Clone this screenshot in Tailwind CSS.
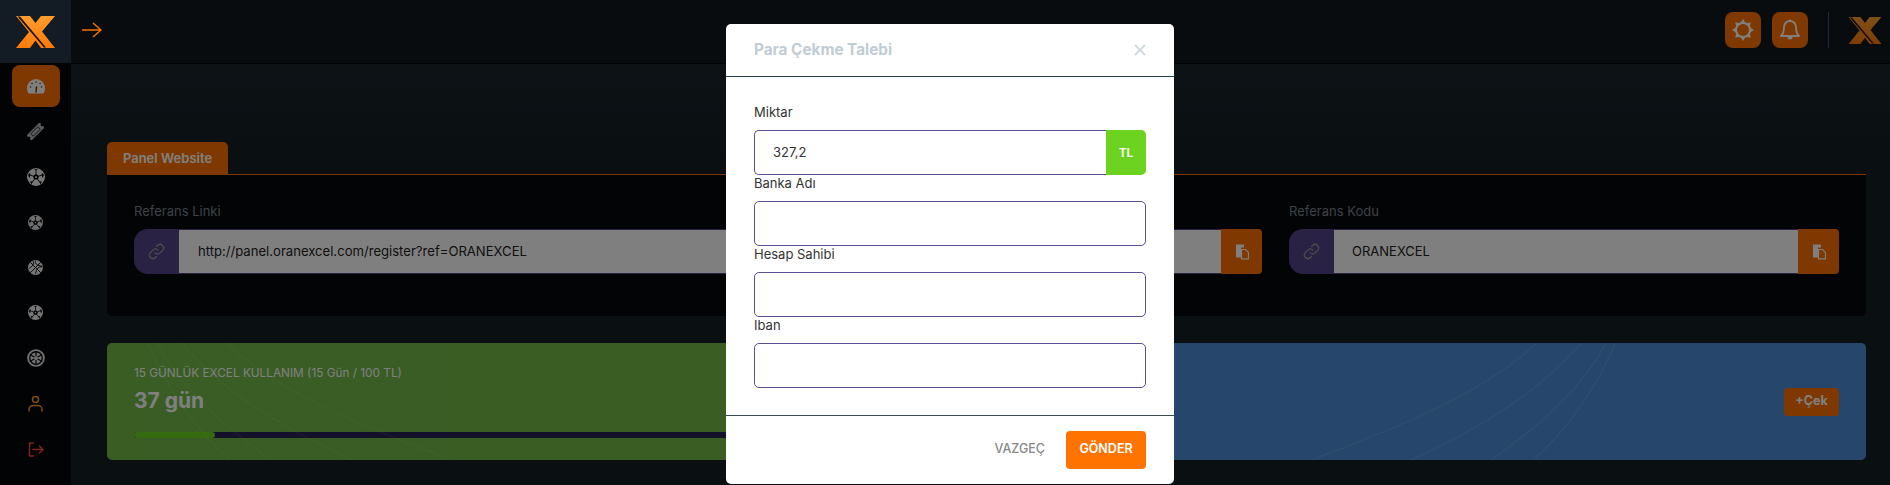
<!DOCTYPE html>
<html lang="en">
<head>
    <meta charset="UTF-8">
    <title>Referans</title>
    <script src="https://cdn.jsdelivr.net/npm/@tailwindcss/browser@4"></script>
</head>
<body class="[font-family:Inter,sans-serif] bg-[#151f25] overflow-hidden">
    <svg class="absolute w-0 h-0">
        <defs>
            <linearGradient id="logo-fill" x1="0" y1="0" x2="0" y2="1">
                <stop offset="0" stop-color="#ff9d2e"/>
                <stop offset="1" stop-color="#ff7a0a"/>
            </linearGradient>
        </defs>
        <symbol id="logo" viewBox="0 0 39 32">
            <polygon fill="url(#logo-fill)" points="0,0 14,0 19.500,7 25,0 39,0 26,15.500 39,32 25,32 19.500,24.500 14,32 0,32 13,16"/>
            <polygon fill="#1a1005" points="1.500,.5 4,.5 30,31.500 28,31.500"/>
        </symbol>
        <symbol id="ball" viewBox="0 0 24 24">
            <circle cx="12" cy="12" r="12" fill="currentColor"/>
            <polygon fill="#000" points="12,7.800 16,10.700 14.500,15.400 9.500,15.400 8,10.700"/>
            <polygon fill="currentColor" points="12,10.500 13.400,11.600 12.900,13.300 11.100,13.300 10.600,11.600"/>
            <path stroke="#000" stroke-width="1.200" d="M12 7.800V3.500M16 10.700l4-1.500M14.500 15.400l2.500 3.600M9.500 15.400L7 19M8 10.700L4 9.200"/>
            <path fill="#000" d="M9.500 1.500h5l-2.500 2zM1.500 9l1.500 4.500 1.500-3.500-.5-3.500zM22.500 9L21 13.500 19.500 10l.5-3.500zM6 21.500l-2-3.500h4zM18 21.500l2-3.500h-4z"/>
        </symbol>
        <symbol id="copy" viewBox="0 0 14 16">
            <path fill="currentColor" d="M1 1h8v3H6v10H1z"/>
            <path fill="none" stroke="currentColor" stroke-width="1.200" d="M6.500 6h4l3 3v6.400h-7z"/>
        </symbol>
        <symbol id="link" viewBox="0 0 24 24">
            <g fill="none" stroke="currentColor" stroke-width="1.800" stroke-linecap="round">
                <path d="M10 14a5 5 0 0 0 7 0l4-4a5 5 0 0 0-7-7l-2 2"/>
                <path d="M14 10a5 5 0 0 0-7 0l-4 4a5 5 0 0 0 7 7l2-2"/>
            </g>
        </symbol>
        <symbol id="streaks" viewBox="0 0 866 117" preserveAspectRatio="none">
            <g fill="none" stroke="#fff" stroke-opacity=".1" stroke-width="1.500">
                <path d="M537 0C470 60 380 90 312 117"/>
                <path d="M581 0C540 50 470 90 411 117"/>
                <path d="M606 0C580 50 530 90 491 117"/>
                <path d="M615 0C600 40 565 90 533 117"/>
            </g>
        </symbol>
    </svg>

    <div class="relative w-[1890px] h-[485px] overflow-hidden">
        <!-- Top bar -->
        <header class="flex items-center h-[64px] pb-[3px] bg-[#12191f] border-b border-[#05070a]">
            <div class="w-[71px]"></div>
            <div class="flex-1"></div>
            <div class="flex items-center gap-[11px]">
                <button class="flex items-center justify-center w-[36px] h-[36px] rounded-lg bg-[#ff7300] text-white">
                    <svg class="w-[24px] h-[24px]" viewBox="0 0 24 24" fill="currentColor">
                        <circle cx="12" cy="12" r="7" fill="none" stroke="currentColor" stroke-width="2"/>
                        <polygon points="12,1 14.500,5 9.500,5"/>
                        <polygon points="12,1 14.500,5 9.500,5" transform="rotate(45 12 12)"/>
                        <polygon points="12,1 14.500,5 9.500,5" transform="rotate(90 12 12)"/>
                        <polygon points="12,1 14.500,5 9.500,5" transform="rotate(135 12 12)"/>
                        <polygon points="12,1 14.500,5 9.500,5" transform="rotate(180 12 12)"/>
                        <polygon points="12,1 14.500,5 9.500,5" transform="rotate(225 12 12)"/>
                        <polygon points="12,1 14.500,5 9.500,5" transform="rotate(270 12 12)"/>
                        <polygon points="12,1 14.500,5 9.500,5" transform="rotate(315 12 12)"/>
                    </svg>
                </button>
                <button class="flex items-center justify-center w-[36px] h-[36px] rounded-lg bg-[#ff7300] text-white">
                    <svg class="w-[24px] h-[24px]" viewBox="0 0 24 24" fill="none" stroke="currentColor" stroke-width="1.800" stroke-linejoin="round">
                        <path d="M12 3a6 6 0 0 0-6 6c0 6-3 9-3 9h18s-3-3-3-9a6 6 0 0 0-6-6z"/>
                        <path fill="currentColor" stroke="none" d="M9.500 19h5a2.500 2.500 0 0 1-5 0z"/>
                        <path d="M12 1.500V3"/>
                    </svg>
                </button>
            </div>
            <div class="w-px h-[36px] ml-[20px] mr-[19px] bg-[#52458a]"></div>
            <svg class="w-[34px] h-[27px] mr-[8px]"><use href="#logo"/></svg>
        </header>

        <div class="flex h-[421px]">
            <!-- Sidebar -->
            <nav class="flex flex-col items-center gap-[3.400px] w-[71px] pt-px bg-[#040609] text-white">
                <a class="flex items-center justify-center w-[48px] h-[42px] rounded-lg bg-[#ff7300]">
                    <svg class="w-[18px] h-[15px]" viewBox="0 0 18 15">
                        <path fill="currentColor" d="M9 0a9 9 0 0 1 9 9c0 2-.5 4-1.500 5.500h-15C.5 13 0 11 0 9a9 9 0 0 1 9-9z"/>
                        <path stroke="#7f3900" stroke-width="1.500" stroke-linecap="round" d="M9 13l.5-5M3.500 8h.1M5 4.500h.1M9 3h.1M13 4.500h.1M14.500 8h.1"/>
                    </svg>
                </a>
                <a class="flex items-center justify-center h-[42px] text-[#b8b8b8]">
                    <svg class="w-[17px] h-[17px]" viewBox="0 0 24 24">
                        <g transform="rotate(-45 12 12)">
                            <path fill="currentColor" d="M-1 7h26v3.200a1.800 1.800 0 0 0 0 3.600V17H-1v-3.200a1.800 1.800 0 0 0 0-3.600z"/>
                            <rect x="5" y="9.500" width="14" height="5" fill="none" stroke="#000" stroke-width="1"/>
                        </g>
                    </svg>
                </a>
                <a class="flex items-center justify-center h-[42px] text-[#eeeeee]"><svg class="w-[18px] h-[18px]"><use href="#ball"/></svg></a>
                <a class="flex items-center justify-center h-[42px] text-[#dddddd]"><svg class="w-[15px] h-[15px]"><use href="#ball"/></svg></a>
                <a class="flex items-center justify-center h-[42px] text-[#eeeeee]">
                    <svg class="w-[15px] h-[15px]" viewBox="0 0 24 24">
                        <circle cx="12" cy="12" r="12" fill="currentColor"/>
                        <path fill="none" stroke="#000" stroke-width="1.500" d="M3.500 3.500l17 17M20.500 3.500l-17 17M8 1c2 5 0 9-6 12M23 11c-6-1-9 2-11 11M12 1c-1 4 1 8 11 9"/>
                    </svg>
                </a>
                <a class="flex items-center justify-center h-[42px] text-[#eeeeee]"><svg class="w-[15px] h-[15px]"><use href="#ball"/></svg></a>
                <a class="flex items-center justify-center h-[42px] text-[#e8e8e8]">
                    <svg class="w-[18px] h-[18px]" viewBox="0 0 24 24">
                        <circle cx="12" cy="12" r="10.500" fill="none" stroke="currentColor" stroke-width="2.500"/>
                        <circle cx="12" cy="12" r="7.500" fill="currentColor"/>
                        <path stroke="#000" stroke-width="1.600" d="M12 2.500v19M3.800 7.200l16.400 9.600M20.200 7.200L3.800 16.800"/>
                        <circle cx="12" cy="12" r="2.500" fill="currentColor"/>
                    </svg>
                </a>
                <a class="flex items-center justify-center h-[42px] text-[#ff9a1f]">
                    <svg class="w-[15px] h-[17px]" viewBox="0 0 15 17" fill="none" stroke="currentColor" stroke-width="1.500" stroke-linecap="round">
                        <circle cx="7.500" cy="4.500" r="3"/>
                        <path d="M1 16v-1.500A4 4 0 0 1 5 10.500h5a4 4 0 0 1 4 4V16"/>
                    </svg>
                </a>
                <a class="flex items-center justify-center h-[42px] text-[#ff4a3a]">
                    <svg class="w-[16px] h-[15px]" viewBox="0 0 16 15" fill="none" stroke="currentColor" stroke-width="1.500" stroke-linecap="round" stroke-linejoin="round">
                        <path d="M5.500 1H1.500v13h4M5 7.500h10M11.500 4l3.500 3.500-3.500 3.500"/>
                    </svg>
                </a>
            </nav>

            <!-- Content -->
            <main class="flex-1 pl-[36px] pr-[24px] bg-gradient-to-b from-[#1a252b] to-[#151f25] from-0% to-20%">
                <div class="pt-[78px]">
                    <div class="flex h-[33px] border-b border-[#ff7300]">
                        <a class="w-[121px] h-[33px] leading-[32px] text-center rounded-t-[5px] bg-[#ff7300] text-white text-[13px] font-semibold">Panel Website</a>
                    </div>
                    <section class="grid grid-cols-[1128px_550px] gap-[27px] h-[141px] px-[27px] pt-[26px] rounded-b-[5px] bg-[#05080c]">
                        <div>
                            <label class="block h-[20px] mb-[8px] leading-[20px] text-[13px] text-[#7b848c]">Referans Linki</label>
                            <div class="flex h-[45px]">
                                <span class="flex items-center justify-center w-[45px] rounded-l-[14px] bg-[#52458a] text-[#999]"><svg class="w-[17px] h-[17px]"><use href="#link"/></svg></span>
                                <input readonly value="http://panel.oranexcel.com/register?ref=ORANEXCEL" class="flex-1 min-w-0 pl-[19px] bg-white border-y border-[#52458a] text-[13.100px] text-[#222]">
                                <span class="flex items-center justify-center w-[41px] rounded-r-[4px] bg-[#ff7300] text-white"><svg class="w-[14px] h-[17px]"><use href="#copy"/></svg></span>
                            </div>
                        </div>
                        <div>
                            <label class="block h-[20px] mb-[8px] leading-[20px] text-[13px] text-[#7b848c]">Referans Kodu</label>
                            <div class="flex h-[45px]">
                                <span class="flex items-center justify-center w-[45px] rounded-l-[14px] bg-[#52458a] text-[#999]"><svg class="w-[17px] h-[17px]"><use href="#link"/></svg></span>
                                <input readonly value="ORANEXCEL" class="flex-1 min-w-0 pl-[18px] bg-white border-y border-[#52458a] text-[13px] text-[#222]">
                                <span class="flex items-center justify-center w-[41px] rounded-r-[4px] bg-[#ff7300] text-white"><svg class="w-[14px] h-[17px]"><use href="#copy"/></svg></span>
                            </div>
                        </div>
                    </section>
                    <div class="grid grid-cols-2 gap-[27px] mt-[27px]">
                        <section class="relative h-[117px] px-[27px] pt-[20px] rounded-[5px] bg-[#74bb49] overflow-hidden text-white">
                            <svg class="absolute left-[-210px] top-0 w-[866px] h-[117px] scale-x-[-1] opacity-70"><use href="#streaks"/></svg>
                            <p class="text-[11.800px] leading-[20px]">15 GÜNLÜK EXCEL KULLANIM (15 Gün / 100 TL)</p>
                            <p class="mt-[4px] text-[21px] leading-[28px] font-bold">37 gün</p>
                            <div class="h-[6px] mt-[17px] rounded-l-full bg-[#282454]">
                                <div class="w-[81px] h-[6px] rounded-full bg-[#6cd420]"></div>
                            </div>
                        </section>
                        <section class="relative flex items-center justify-end h-[117px] px-[27px] rounded-[5px] bg-[#4c8ed6] overflow-hidden text-white">
                            <svg class="absolute left-0 top-0 w-[866px] h-[117px]"><use href="#streaks"/></svg>
                            <button class="relative w-[55px] h-[28px] rounded-[4px] bg-[#ff7300] text-[12.500px] font-bold">+Çek</button>
                        </section>
                    </div>
                </div>
            </main>
        </div>

        <!-- Backdrop -->
        <div class="absolute inset-0 z-10 bg-black/50"></div>

        <!-- Logo and toggle stay above the backdrop -->
        <div class="absolute left-0 top-0 z-20 flex items-center justify-center w-[71px] h-[63px] bg-[#131b24]">
            <svg class="w-[39px] h-[32px]"><use href="#logo"/></svg>
        </div>
        <svg class="absolute left-[82px] top-[22px] z-20 w-[20px] h-[16px]" viewBox="0 0 20 16" fill="none" stroke="#f57200" stroke-width="1.500">
            <path d="M0 8h19M11 1l8 7-8 7"/>
        </svg>

        <!-- Modal -->
        <div class="absolute left-[726px] top-[24px] z-30 w-[448px] h-[460px] flex flex-col rounded-[5px] bg-white">
            <div class="flex items-center justify-between h-[53px] px-[28px] border-b border-[#24424e]">
                <h5 class="text-[15.300px] font-bold text-[#c2ccd4]">Para Çekme Talebi</h5>
                <svg class="w-[12px] h-[12px]" viewBox="0 0 12 12" stroke="#d3dade" stroke-width="2"><path d="M1 1l10 10M11 1L1 11"/></svg>
            </div>
            <form class="flex-1 px-[28px] pt-[27px]">
                <label class="block h-[18px] mb-[8px] leading-[16px] text-[13px] text-[#333]">Miktar</label>
                <div class="flex h-[45px]">
                    <input value="327,2" class="flex-1 min-w-0 pl-[18px] rounded-l-[5px] border border-r-0 border-[#5d4e96] text-[13px] text-[#333]">
                    <span class="flex items-center justify-center w-[40px] rounded-r-[5px] bg-[#6cd420] text-white text-[12px] font-semibold">TL</span>
                </div>
                <label class="block h-[18px] mb-[8px] leading-[16px] text-[13px] text-[#333]">Banka Adı</label>
                <input class="block w-full h-[45px] rounded-[5px] border border-[#5d4e96]">
                <label class="block h-[18px] mb-[8px] leading-[16px] text-[13px] text-[#333]">Hesap Sahibi</label>
                <input class="block w-full h-[45px] rounded-[5px] border border-[#5d4e96]">
                <label class="block h-[18px] mb-[8px] leading-[16px] text-[13px] text-[#333]">Iban</label>
                <input class="block w-full h-[45px] rounded-[5px] border border-[#5d4e96]">
            </form>
            <div class="flex items-center justify-end gap-[21px] h-[69px] pb-px px-[28px] border-t border-[#3a4a55]">
                <span class="text-[12.500px] font-medium text-[#888]">VAZGEÇ</span>
                <button class="w-[80px] h-[38px] rounded-[4px] bg-[#ff7300] text-white text-[12.500px] font-semibold">GÖNDER</button>
            </div>
        </div>
    </div>
</body>
</html>
